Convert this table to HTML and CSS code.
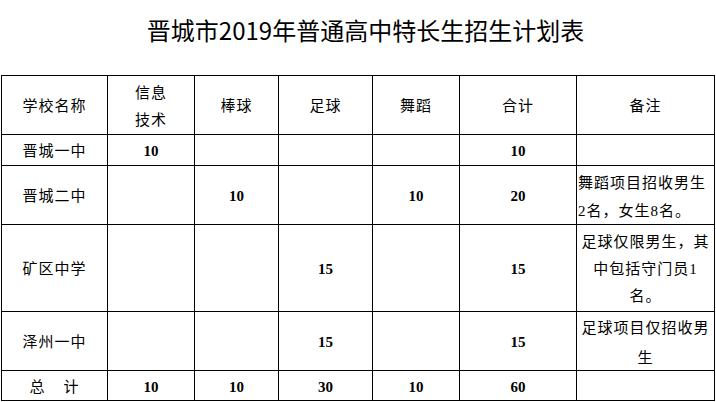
FILE: index.html
```html
<!DOCTYPE html>
<html lang="zh-CN">
<head>
<meta charset="utf-8">
<title>晋城市2019年普通高中特长生招生计划表</title>
<link rel="stylesheet" href="styles.css">
</head>
<body>
<div class="page">
  <h1 class="title">晋城市2019年普通高中特长生招生计划表</h1>
  <div class="plan" role="table">
    <div class="cell">学校名称</div>
    <div class="cell">信息<br>技术</div>
    <div class="cell">棒球</div>
    <div class="cell">足球</div>
    <div class="cell">舞蹈</div>
    <div class="cell">合计</div>
    <div class="cell">备注</div>

    <div class="cell">晋城一中</div>
    <div class="cell num">10</div>
    <div class="cell"></div>
    <div class="cell"></div>
    <div class="cell"></div>
    <div class="cell num">10</div>
    <div class="cell"></div>

    <div class="cell">晋城二中</div>
    <div class="cell"></div>
    <div class="cell num">10</div>
    <div class="cell"></div>
    <div class="cell num">10</div>
    <div class="cell num">20</div>
    <div class="cell note left">舞蹈项目招收男生<br>2名，女生8名。</div>

    <div class="cell">矿区中学</div>
    <div class="cell"></div>
    <div class="cell"></div>
    <div class="cell num">15</div>
    <div class="cell"></div>
    <div class="cell num">15</div>
    <div class="cell note">足球仅限男生，其<br>中包括守门员1<br>名。</div>

    <div class="cell">泽州一中</div>
    <div class="cell"></div>
    <div class="cell"></div>
    <div class="cell num">15</div>
    <div class="cell"></div>
    <div class="cell num">15</div>
    <div class="cell note loose">足球项目仅招收男<br>生</div>

    <div class="cell">总<span class="gap"></span>计</div>
    <div class="cell num">10</div>
    <div class="cell num">10</div>
    <div class="cell num">30</div>
    <div class="cell num">10</div>
    <div class="cell num">60</div>
    <div class="cell"></div>
  </div>
</div>
</body>
</html>
```
FILE: styles.css
```css
html, body {
  margin: 0;
  padding: 0;
  background: #ffffff;
}

.page {
  width: 716px;
  height: 402px;
  overflow: hidden;
  color: #000;
}

.title {
  margin: 0;
  height: 75px;
  box-sizing: border-box;
  padding: 18px 0 0 15px;
  text-align: center;
  font-family: "Noto Sans CJK SC", "Liberation Sans", sans-serif;
  font-weight: normal;
  font-size: 24px;
  line-height: 24px;
  color: #000;
}

.plan {
  display: grid;
  grid-template-columns: 105px 86px 83px 93px 86px 116px 137px;
  grid-template-rows: 58px 30px 58px 86px 58px 29px;
  gap: 1px;
  padding: 1px;
  width: max-content;
  margin-left: 1px;
  background: #000;
  font-family: "Liberation Serif", "Noto Sans CJK SC", serif;
  font-size: 15px;
  letter-spacing: 1px;
  color: #000;
}

.cell {
  background: #fff;
  display: flex;
  align-items: center;
  justify-content: center;
  text-align: center;
  padding-top: 3px;
  box-sizing: border-box;
  line-height: 27px;
  white-space: nowrap;
  overflow: hidden;
}

.num {
  font-weight: bold;
  letter-spacing: 0;
}

.note.left {
  justify-content: flex-start;
  text-align: left;
  padding-left: 1px;
  line-height: 28px;
}

.note.loose {
  line-height: 30px;
}

.gap {
  display: inline-block;
  width: 18px;
}
```
